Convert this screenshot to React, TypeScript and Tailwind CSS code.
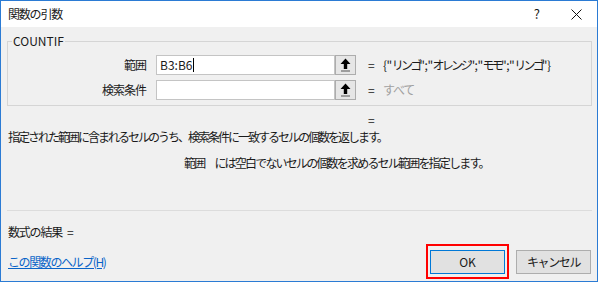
import React from "react";

const font = "font-['Noto_Sans_CJK_JP','Noto_Sans',sans-serif]";

function Jp({ text, track }: { text: string; track: string }) {
  const parts = text.split(/([\u3000-\u30ff]+)/);
  return (
    <>
      {parts.map((p, i) =>
        /[\u3000-\u30ff]/.test(p) ? (
          <span key={i} className={track}>
            {p}
          </span>
        ) : (
          <span key={i} className="tracking-[-0.5px]">{p}</span>
        ),
      )}
    </>
  );
}

function RefButton() {
  return (
    <div className="flex h-[20px] w-[21px] shrink-0 items-center justify-center border border-[#adadad] bg-[#e6e6e6]">
      <svg width="13" height="16" viewBox="0 0 13 16" aria-hidden>
        <path d="M6.5 1.5 L11.5 7 L8.2 7 L8.2 12 L4.8 12 L4.8 7 L1.5 7 Z" fill="#000" />
        <rect x="2" y="13.5" width="9" height="1" fill="#555" />
      </svg>
    </div>
  );
}

function ArgRow({
  label,
  value,
  result,
  dim,
  caret,
}: {
  label: string;
  value: string;
  result: React.ReactNode;
  dim?: boolean;
  caret?: boolean;
}) {
  return (
    <div className="flex h-[20px] items-center">
      <div className="mr-[10px] w-[138px] text-right tracking-[-1px]">{label}</div>
      <div className="flex h-[20px] w-[179px] items-center border border-[#c4c4c4] bg-white pl-[3px]">
        <span>{value}</span>
        {caret && <span className="ml-px h-[14px] w-px bg-black" />}
      </div>
      <RefButton />
      <div className="ml-[12px] w-[15px]">=</div>
      <div className={dim ? "tracking-[-1.2px] text-[#a0a0a0]" : "whitespace-nowrap"}>{result}</div>
    </div>
  );
}

export default function App() {
  return (
    <div className={`h-[283px] w-[600px] bg-white ${font} text-[12px] leading-[14px] text-[#1a1a1a]`}>
      <div className="flex h-[282px] w-[598px] flex-col border border-[#2b7bd4] bg-[#f0f0f0]">
        <div className="flex h-[26px] shrink-0 items-center bg-white pl-[7px]">
          <span className="tracking-[-1.2px]">関数の引数</span>
          <span className="ml-auto mr-[31px] text-[13px]">?</span>
          <svg width="11" height="11" viewBox="0 0 11 11" className="mr-[15px]" aria-hidden>
            <path d="M0.5 0.5 L10.5 10.5 M10.5 0.5 L0.5 10.5" stroke="#111" strokeWidth="1" />
          </svg>
        </div>

        <div className="flex flex-1 flex-col px-[6px]">
          <fieldset className="mt-[7px] w-[585px] border border-[#d5d5d5] pb-[5px]">
            <legend className="ml-[4px] px-[1px] leading-[14px]">COUNTIF</legend>
            <div className="mt-[7px] flex flex-col gap-[5px]">
              <ArgRow
                label="範囲"
                value="B3:B6"
                caret
                result={<Jp text={'{"リンゴ";"オレンジ";"モモ";"リンゴ"}'} track="tracking-[-2.8px]" />}
              />
              <ArgRow label="検索条件" value="" result="すべて" dim />
            </div>
          </fieldset>

          <div className="mt-[7px] pl-[361px]">=</div>
          <div className="mt-[3px] pl-px tracking-[-2px]">
            指定された範囲に含まれるセルのうち、検索条件に一致するセルの個数を返します。
          </div>
          <div className="mt-[12px] flex pl-[177px] tracking-[-1.8px]">
            <span>範囲</span>
            <span className="ml-[10px]">には空白でないセルの個数を求めるセル範囲を指定します。</span>
          </div>

          <div className="mt-[40px] h-px w-[585px] bg-[#dcdcdc]" />

          <div className="mt-[14px] flex pl-px">
            <span className="tracking-[-1.2px]">数式の結果</span>
            <span className="ml-[5px]">=</span>
          </div>

          <div className="mt-[11px] flex items-center">
            <a href="#" className="pl-px tracking-[-1.4px] text-[#0a64c8] underline">
              この関数のヘルプ(H)
            </a>
            <div className="ml-auto flex gap-[11px]">
              <div className="relative">
                <button className="h-[24px] w-[75px] border border-[#0078d7] bg-[#e1e1e1]">OK</button>
                <div className="pointer-events-none absolute -left-[4px] -top-[6px] h-[35px] w-[83px] border-2 border-[#ff0000]" />
              </div>
              <button className="h-[24px] w-[75px] border border-[#adadad] bg-[#e1e1e1] tracking-[-1.4px]">
                キャンセル
              </button>
            </div>
          </div>
        </div>
      </div>
    </div>
  );
}
